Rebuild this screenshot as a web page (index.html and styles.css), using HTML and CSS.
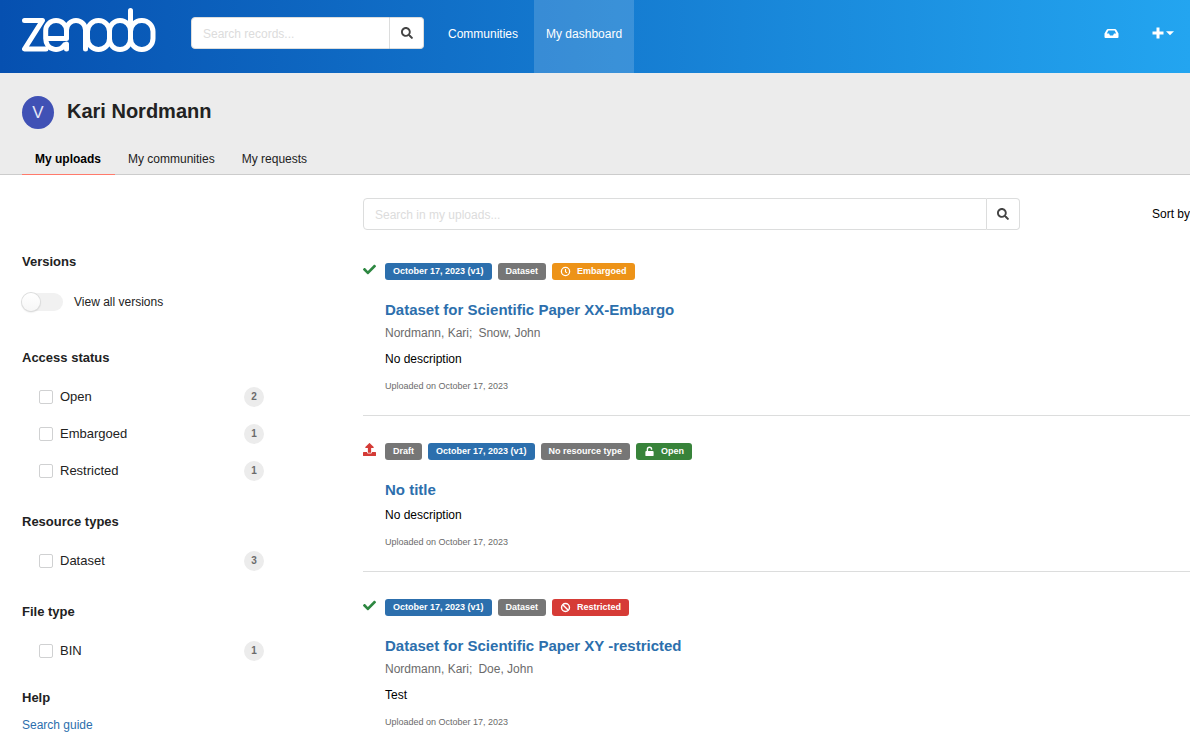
FILE: index.html
```html
<!DOCTYPE html>
<html lang="en">
<head>
<meta charset="utf-8">
<title>My uploads - Zenodo</title>
<meta name="viewport" content="width=device-width, initial-scale=1">
<link rel="stylesheet" href="styles.css">
</head>
<body>
<svg class="sprite" aria-hidden="true">
  <symbol id="search" viewBox="0 0 512 512"><path d="M505 442.700 405.300 343c-4.500-4.500-10.600-7-17-7H372c27.600-35.300 44-79.700 44-128C416 93.100 322.900 0 208 0S0 93.100 0 208s93.100 208 208 208c48.300 0 92.700-16.400 128-44v16.300c0 6.400 2.500 12.500 7 17l99.700 99.700c9.400 9.400 24.600 9.400 33.900 0l28.300-28.300c9.400-9.400 9.400-24.600.1-34zM208 336c-70.700 0-128-57.200-128-128 0-70.700 57.200-128 128-128 70.700 0 128 57.200 128 128 0 70.700-57.200 128-128 128z"/></symbol>
  <symbol id="check" viewBox="0 0 512 512"><path d="M173.900 439.400 7.500 273c-10-10-10-26.200 0-36.200l36.200-36.200c10-10 26.200-10 36.200 0L192 312.700 432.100 72.600c10-10 26.200-10 36.200 0l36.200 36.200c10 10 10 26.200 0 36.200L210.100 439.400c-10 10-26.200 10-36.200 0z"/></symbol>
  <symbol id="upload" viewBox="0 0 512 512"><path d="M296 384h-80c-13.300 0-24-10.700-24-24V192h-87.700c-17.800 0-26.700-21.500-14.100-34.100L242.300 5.700c7.500-7.500 19.800-7.500 27.300 0l152.200 152.200c12.600 12.600 3.700 34.100-14.100 34.100H320v168c0 13.300-10.700 24-24 24zm216-8v112c0 13.300-10.700 24-24 24H24c-13.300 0-24-10.700-24-24V376c0-13.300 10.700-24 24-24h136v8c0 30.900 25.100 56 56 56h80c30.900 0 56-25.100 56-56v-8h136c13.300 0 24 10.700 24 24z"/></symbol>
  <symbol id="clock" viewBox="0 0 12 12"><circle cx="6" cy="6" r="4.500" fill="none" stroke="currentColor" stroke-width="1.400"/><path d="M6 3.200V6.300L7.700 7.500" fill="none" stroke="currentColor" stroke-width="1.200"/></symbol>
  <symbol id="ban" viewBox="0 0 12 12"><circle cx="6" cy="6" r="4.300" fill="none" stroke="currentColor" stroke-width="1.600"/><path d="M3 3l6 6" stroke="currentColor" stroke-width="1.600"/></symbol>
  <symbol id="unlock" viewBox="0 0 12 12"><rect x="1.500" y="5.500" width="9" height="5.500" rx="1"/><path d="M3.700 6V3.700a2.300 2.300 0 0 1 4.600 0V4.200" fill="none" stroke="currentColor" stroke-width="1.500"/></symbol>
</svg>

<header class="topbar">
  <a class="brand" href="#" aria-label="Zenodo">
    <svg class="logo" viewBox="0 0 134 46" aria-hidden="true">
      <g fill="none" stroke="#fff" stroke-width="5" stroke-linecap="round" stroke-linejoin="round">
        <path d="M2.500 12.500H20.500L2.500 41H24"/>
        <path d="M24 30.500H44.500V22.500A10.400 10 0 0 0 23.700 22.500V30.500A10.400 11 0 0 0 42.500 37"/>
        <path d="M44.500 36V41M44.500 23V22A9.500 9.500 0 0 1 63.500 22V41"/>
        <rect x="65.500" y="12.500" width="22" height="29" rx="11"/>
        <rect x="87.500" y="12.500" width="21" height="29" rx="10.500"/>
        <path d="M108.500 2.500V27"/>
        <rect x="108.500" y="12.500" width="22.500" height="29" rx="11"/>
      </g>
    </svg>
  </a>
  <form class="search site-search" role="search">
    <input type="search" placeholder="Search records..." aria-label="Search records">
    <button type="button" aria-label="Search"><svg class="icon"><use href="#search"/></svg></button>
  </form>
  <nav class="main-nav">
    <a href="#">Communities</a>
    <a href="#" class="current">My dashboard</a>
  </nav>
  <div class="tools">
    <a href="#" aria-label="Requests"><svg class="inbox" viewBox="0 0 15 11" aria-hidden="true"><path fill="#fff" fill-rule="evenodd" d="M4 1h7q.8 0 1.300.8L14.500 5.500V9q0 1-1 1h-12q-1 0-1-1V5.500L2.700 1.800Q3.200 1 4 1zM4.400 2.500 2.800 5.500H5l1 2h3l1-2h2.200L10.600 2.500z"/></svg></a>
    <button type="button" aria-label="New"><svg class="plus" viewBox="0 0 22 12" aria-hidden="true"><path fill="#fff" d="M4.500.500h3v4h4v3h-4v4h-3v-4h-4v-3h4zM14 4.300h8l-4 4z"/></svg></button>
  </div>
</header>

<section class="profile">
  <div class="person"><span class="avatar" aria-hidden="true">V</span><h1>Kari Nordmann</h1></div>
  <nav class="tabs">
    <a href="#" class="current" aria-current="page">My uploads</a>
    <a href="#">My communities</a>
    <a href="#">My requests</a>
  </nav>
</section>

<main class="layout">
  <aside class="filters">
    <section>
      <h2>Versions</h2>
      <label class="switch"><input type="checkbox" role="switch"><span>View all versions</span></label>
    </section>
    <section class="access">
      <h2>Access status</h2>
      <ul>
        <li><label><input type="checkbox">Open</label><span class="count">2</span></li>
        <li><label><input type="checkbox">Embargoed</label><span class="count">1</span></li>
        <li><label><input type="checkbox">Restricted</label><span class="count">1</span></li>
      </ul>
    </section>
    <section>
      <h2>Resource types</h2>
      <ul>
        <li><label><input type="checkbox">Dataset</label><span class="count">3</span></li>
      </ul>
    </section>
    <section>
      <h2>File type</h2>
      <ul>
        <li><label><input type="checkbox">BIN</label><span class="count">1</span></li>
      </ul>
    </section>
    <section class="help">
      <h2>Help</h2>
      <a href="#">Search guide</a>
    </section>
  </aside>

  <div class="results">
    <div class="controls">
      <form class="search" role="search">
        <input type="search" placeholder="Search in my uploads..." aria-label="Search in my uploads">
        <button type="button" aria-label="Search"><svg class="icon"><use href="#search"/></svg></button>
      </form>
      <span class="sort">Sort by</span>
    </div>

    <article class="record">
      <svg class="status published" aria-label="Published"><use href="#check"/></svg>
      <div class="body">
        <div class="tags"><span class="tag blue">October 17, 2023 (v1)</span><span class="tag">Dataset</span><span class="tag orange"><svg><use href="#clock"/></svg>Embargoed</span></div>
        <h3><a href="#">Dataset for Scientific Paper XX-Embargo</a></h3>
        <p class="authors"><span>Nordmann, Kari;</span><span>Snow, John</span></p>
        <p class="description">No description</p>
        <p class="uploaded">Uploaded on October 17, 2023</p>
      </div>
    </article>

    <article class="record">
      <svg class="status draft" aria-label="Draft"><use href="#upload"/></svg>
      <div class="body">
        <div class="tags"><span class="tag">Draft</span><span class="tag blue">October 17, 2023 (v1)</span><span class="tag">No resource type</span><span class="tag green"><svg><use href="#unlock"/></svg>Open</span></div>
        <h3><a href="#">No title</a></h3>
        <p class="description">No description</p>
        <p class="uploaded">Uploaded on October 17, 2023</p>
      </div>
    </article>

    <article class="record">
      <svg class="status published" aria-label="Published"><use href="#check"/></svg>
      <div class="body">
        <div class="tags"><span class="tag blue">October 17, 2023 (v1)</span><span class="tag">Dataset</span><span class="tag red"><svg><use href="#ban"/></svg>Restricted</span></div>
        <h3><a href="#">Dataset for Scientific Paper XY -restricted</a></h3>
        <p class="authors"><span>Nordmann, Kari;</span><span>Doe, John</span></p>
        <p class="description">Test</p>
        <p class="uploaded">Uploaded on October 17, 2023</p>
      </div>
    </article>
  </div>
</main>
</body>
</html>
```
FILE: styles.css
```css
* { box-sizing: border-box; }
body {
  margin: 0;
  background: #fff;
  color: #222;
  font: 12px/18px "Liberation Sans", Arial, sans-serif;
}
h1, h2, h3, p, ul { margin: 0; padding: 0; }
ul { list-style: none; }
a { color: #2c6fad; text-decoration: none; }
button, input { font: inherit; margin: 0; }
.sprite { display: none; }

/* Top bar */
.topbar {
  display: flex;
  align-items: center;
  min-height: 73px;
  padding-left: 22px;
  background: linear-gradient(90deg, #0650b0, #23a5f0);
}
.brand { display: flex; margin: 0 35px 11px 0; }
.logo { width: 134px; height: 46px; }
.search { display: flex; height: 32px; }
.search input {
  flex: 1;
  min-width: 0;
  padding: 1px 11px 0;
  border: 1px solid #dcdddd;
  border-radius: 4px 0 0 4px;
  background: #fff;
  color: #222;
  appearance: none;
}
.search input::placeholder { color: #dcdcdc; opacity: 1; }
.search button {
  display: flex;
  align-items: center;
  justify-content: center;
  width: 33px;
  padding: 0;
  border: 1px solid #dcdddd;
  border-left: 0;
  border-radius: 0 4px 4px 0;
  background: #fff;
  color: #444;
}
.icon { width: 12px; height: 12px; fill: currentColor; }
.site-search { width: 233px; margin: 0 12px 7px 0; }
.site-search button { width: 34px; }
.main-nav { display: flex; gap: 4px; align-self: stretch; }
.main-nav a {
  display: flex;
  align-items: center;
  padding: 0 12px 5px;
  color: #fff;
}
.main-nav .current { background: rgba(255, 255, 255, .16); }
.tools {
  display: flex;
  align-items: center;
  gap: 33px;
  margin: 0 16px 7px auto;
}
.tools a, .tools button { display: flex; padding: 0; border: 0; background: none; }
.inbox { width: 15px; height: 11px; }
.plus { width: 22px; height: 12px; }

/* Profile band */
.profile { padding: 23px 0 0 22px; background: #ececec; box-shadow: inset 0 -1px #ccc; }
.person { display: flex; align-items: center; gap: 13px; }
.avatar {
  width: 32px;
  height: 33px;
  border-radius: 50%;
  background: #4051b5;
  color: #e4e6f5;
  font-size: 17px;
  line-height: 33px;
  text-align: center;
}
.person h1 { padding-bottom: 3px; font-size: 20px; line-height: 30px; }
.tabs { display: flex; margin-top: 13px; }
.tabs a {
  padding: 8px 14px 6px 13px;
  border-bottom: 1px solid transparent;
  color: #222;
}
.tabs .current { border-color: #ff7a6b; color: #000; font-weight: bold; }

/* Filters */
.layout {
  display: grid;
  grid-template-columns: 242px minmax(0, 1fr);
  column-gap: 99px;
  padding: 23px 0 0 22px;
}
.filters { display: flex; flex-direction: column; gap: 24px; padding-top: 55px; }
.filters h2 { margin-bottom: 12px; font-size: 13px; line-height: 18px; }
.access { margin-top: 4px; }
.filters ul { display: flex; flex-direction: column; gap: 1px; }
.filters li {
  display: flex;
  align-items: center;
  justify-content: space-between;
  height: 36px;
  padding-left: 17px;
}
.filters label { display: flex; align-items: center; }
.filters li label { gap: 7px; font-size: 13px; }
.filters li input {
  width: 14px;
  height: 14px;
  border: 1px solid #d0d1d2;
  border-radius: 2px;
  background: #fff;
  appearance: none;
}
.count {
  width: 20px;
  height: 20px;
  border-radius: 50%;
  background: #ececec;
  color: #6b6b6b;
  font-size: 10px;
  font-weight: bold;
  line-height: 20px;
  text-align: center;
}
.switch { gap: 11px; padding: 10px 0; }
.switch input {
  width: 41px;
  height: 18px;
  border-radius: 9px;
  background: #f1f1f1;
  appearance: none;
}
.switch input::before {
  content: "";
  display: block;
  width: 18px;
  height: 18px;
  border-radius: 50%;
  background: linear-gradient(#fff, #f6f6f6);
  box-shadow: 0 0 0 1px #dcdddd, 0 1px 2px rgba(0, 0, 0, .2);
}
.filters .help { margin-top: -4px; }
.help h2 { margin-bottom: 9px; }

/* Results */
.controls { display: flex; align-items: center; justify-content: space-between; }
.controls .search { flex: 0 1 657px; }
.sort { color: #000; }
.controls + .record { padding-top: 32px; }
.record {
  display: flex;
  gap: 9px;
  padding: 26px 0 22px;
  border-bottom: 1px solid #dcdddd;
}
.status { flex: none; width: 13px; height: 13px; margin-top: 1px; fill: currentColor; }
.published { color: #2d8741; }
.draft { color: #d43b36; }
.body { min-width: 0; }
.tags { display: flex; align-items: center; gap: 6px; min-height: 18px; }
.tag {
  display: flex;
  align-items: center;
  gap: 6px;
  padding: 1px 8px;
  border-radius: 3px;
  background: #767676;
  color: #fff;
  font-size: 9px;
  font-weight: bold;
  line-height: 15px;
}
.tag svg { width: 11px; height: 11px; fill: currentColor; }
.blue { background: #2c6fad; }
.orange { background: #ed9318; }
.green { background: #38833a; }
.red { background: #d63b36; }
.body h3 { margin-top: 20px; font-size: 15px; line-height: 20px; }
.authors { display: flex; gap: 6px; margin: 4px 0 8px; color: #6b6b6b; }
.description { margin-top: 6px; color: #000; }
.uploaded { margin-top: 11px; color: #6b6b6b; font-size: 9px; line-height: 14px; }
```
